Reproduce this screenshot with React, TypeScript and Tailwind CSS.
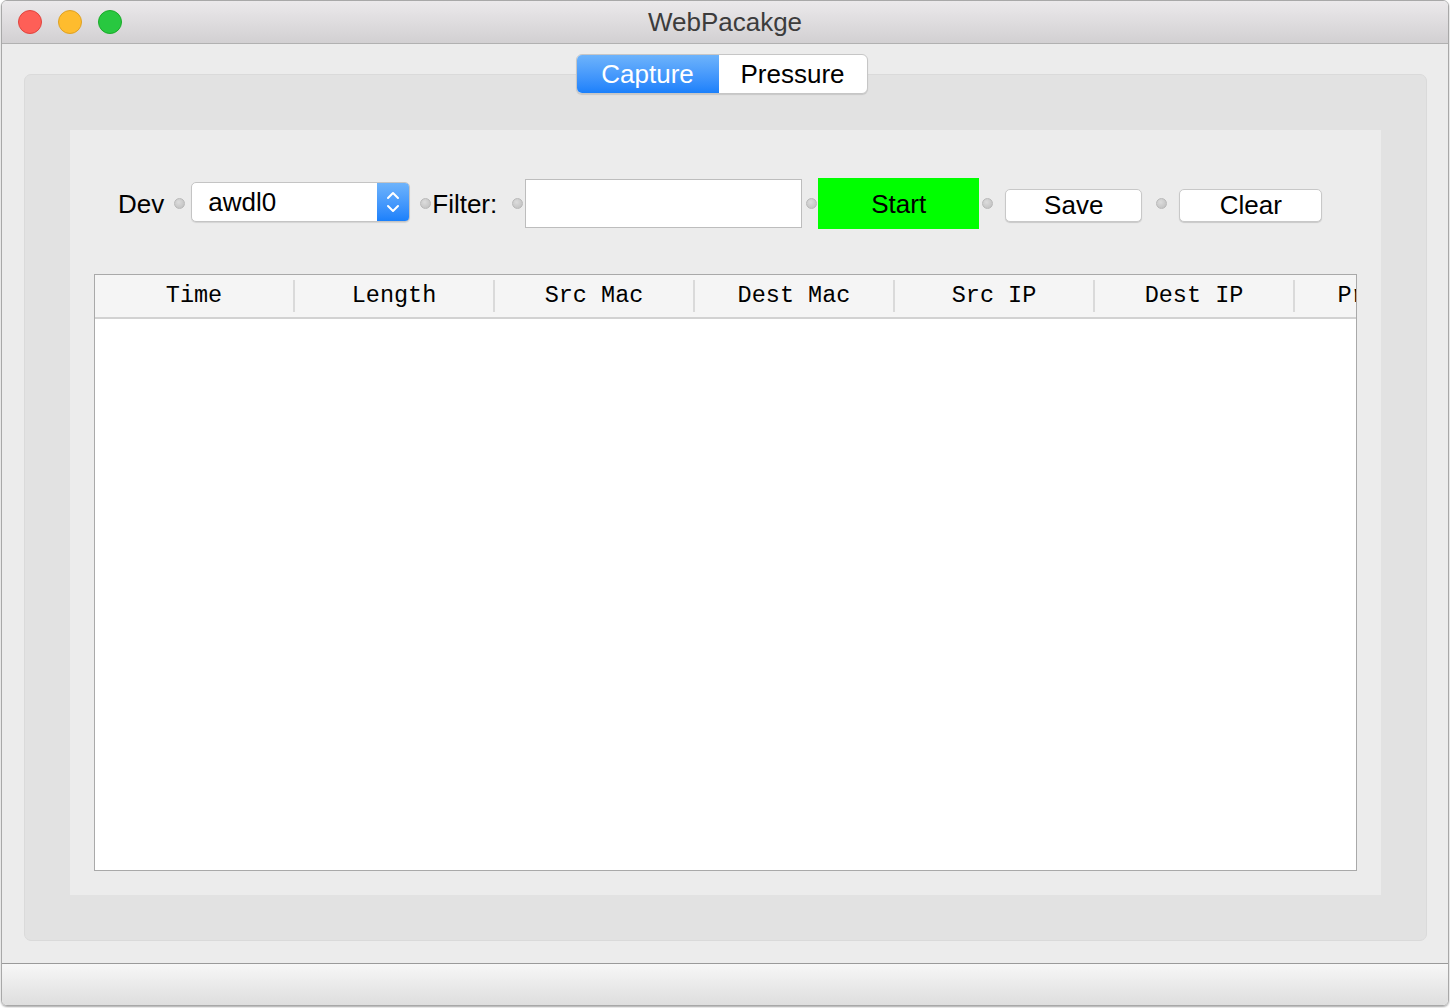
import React from "react";

const columns = ["Time", "Length", "Src Mac", "Dest Mac", "Src IP", "Dest IP", "Protocol"];

const Dot = ({ className = "" }: { className?: string }) => (
  <span
    className={`block size-[11px] shrink-0 rounded-full border border-[#b9b9b9] bg-[radial-gradient(circle_at_40%_35%,#dcdcdc,#bdbdbd)] ${className}`}
  />
);

const TrafficLight = ({ bg, border }: { bg: string; border: string }) => (
  <span className={`block size-[24px] rounded-full border ${bg} ${border}`} />
);

export default function App() {
  return (
    <div className="w-[1450px] h-[1008px] bg-white font-['Liberation_Sans',Arial,sans-serif] text-black">
      <div className="ml-[1px] w-[1448px] h-[1006px] rounded-[6px] border border-[#a8a8a8] flex flex-col overflow-hidden shadow-[0_1px_2px_rgba(0,0,0,0.35)]">
        {/* title bar */}
        <div className="h-[43px] shrink-0 grid grid-cols-[1fr_auto_1fr] items-center border-b border-[#b1b1b1] bg-gradient-to-b from-[#ebe9eb] to-[#d2d0d2]">
          <div className="flex items-center gap-[16px] pl-[16px]">
            <TrafficLight bg="bg-[#fe5f57]" border="border-[#e0443e]" />
            <TrafficLight bg="bg-[#febc2e]" border="border-[#dea123]" />
            <TrafficLight bg="bg-[#28c840]" border="border-[#1aab29]" />
          </div>
          <div className="text-[26px] leading-none text-[#3c3c3c]">WebPacakge</div>
          <div />
        </div>

        {/* content */}
        <div className="flex-1 bg-[#ececec] pt-[10px] px-[22px]">
          <div className="relative z-10 flex justify-center pr-[7px]">
            <div className="flex h-[40px] rounded-[6px] border border-[#c6c6c6] bg-white shadow-[0_1px_1px_rgba(0,0,0,0.12)] overflow-hidden text-[26px] leading-none">
              <div className="w-[142px] flex items-center justify-center text-white bg-gradient-to-b from-[#6db3fb] to-[#1a80fb]">
                Capture
              </div>
              <div className="w-[148px] flex items-center justify-center">Pressure</div>
            </div>
          </div>

          <div className="-mt-[20px] w-[1403px] h-[867px] rounded-[7px] bg-[#e2e2e2] border border-[#dadada] pt-[55px] pl-[45px]">
            <div className="w-[1311px] h-[765px] bg-[#ececec] pt-[48px] pl-[24px]">
              {/* toolbar */}
              <div className="h-[51px] flex items-center text-[26px] leading-none pl-[24px]">
                <span>Dev</span>
                <Dot className="ml-[10px]" />
                <div className="ml-[6px] w-[219px] h-[40px] -mt-[3px] flex rounded-[5px] border border-[#c4c4c4] bg-white shadow-[0_1px_1px_rgba(0,0,0,0.1)] overflow-hidden">
                  <div className="flex-1 flex items-center pl-[16px]">awdl0</div>
                  <div className="w-[32px] flex items-center justify-center bg-gradient-to-b from-[#6db3fb] to-[#1a80fb]">
                    <svg width="16" height="26" viewBox="0 0 16 26" fill="none" stroke="white" strokeWidth="2" strokeLinecap="round" strokeLinejoin="round">
                      <path d="M3 9 L8 4 L13 9" />
                      <path d="M3 17 L8 22 L13 17" />
                    </svg>
                  </div>
                </div>
                <Dot className="ml-[10px]" />
                <span className="ml-[1px]">Filter:</span>
                <Dot className="ml-[15px]" />
                <div className="ml-[2px] w-[277px] h-[49px] bg-white border border-[#bdbdbd]" />
                <Dot className="ml-[4px]" />
                <button className="ml-[1px] w-[161px] h-[51px] bg-[#00ff00] flex items-center justify-center">Start</button>
                <Dot className="ml-[3px]" />
                <button className="ml-[12px] mt-[3px] w-[137px] h-[33px] rounded-[5px] bg-white border border-[#c8c8c8] shadow-[0_1px_1px_rgba(0,0,0,0.15)] flex items-center justify-center">
                  Save
                </button>
                <Dot className="ml-[14px]" />
                <button className="ml-[12px] mt-[3px] w-[143px] h-[33px] rounded-[5px] bg-white border border-[#c8c8c8] shadow-[0_1px_1px_rgba(0,0,0,0.15)] flex items-center justify-center">
                  Clear
                </button>
              </div>

              {/* table */}
              <div className="mt-[45px] w-[1263px] h-[597px] border border-[#a9a9a9] bg-white overflow-hidden">
                <div className="h-[44px] flex items-center bg-[#f5f5f5] border-b-2 border-[#d2d2d2] font-['Courier_New','Liberation_Mono',monospace] text-[23.5px] leading-none whitespace-nowrap">
                  {columns.map((c, i) => (
                    <React.Fragment key={c}>
                      <div className="w-[198px] shrink-0 text-center">{c}</div>
                      {i < columns.length - 1 && <div className="w-[2px] h-[32px] shrink-0 bg-[#dadada]" />}
                    </React.Fragment>
                  ))}
                </div>
              </div>
            </div>
          </div>
        </div>

        {/* status bar */}
        <div className="h-[42px] shrink-0 border-t border-[#9a9a9a] bg-gradient-to-b from-[#f7f7f7] to-[#dedede]" />
      </div>
    </div>
  );
}
